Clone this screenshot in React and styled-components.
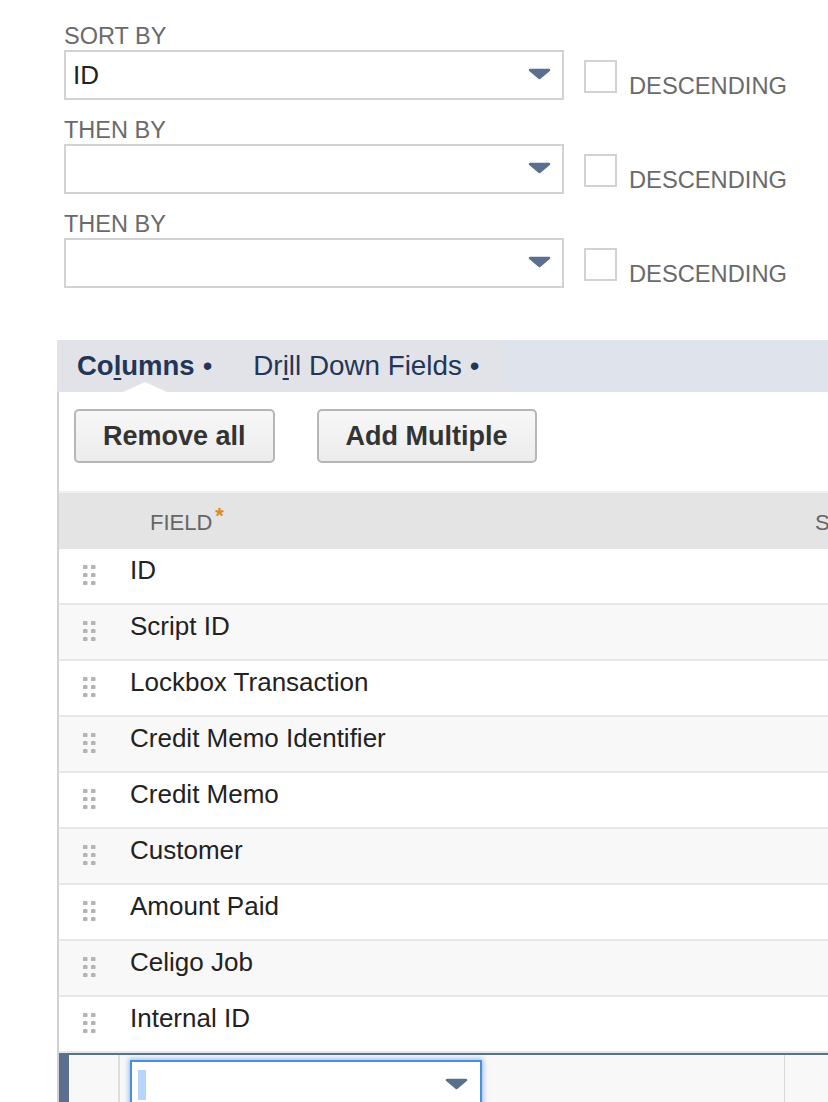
import React from "react";
import styled, { createGlobalStyle } from "styled-components";

const GlobalStyle = createGlobalStyle`
  html, body { margin: 0; padding: 0; background: #fff; }
  body {
    font-family: "Liberation Sans", Arial, Helvetica, sans-serif;
    overflow: hidden;
  }
`;

const Page = styled.div`
  width: 828px;
  height: 1102px;
  overflow: hidden;
  background: #fff;
`;

const SortForm = styled.div`
  display: flex;
  flex-direction: column;
  gap: 18px;
  padding: 24px 0 0 64px;
`;

const SortGroup = styled.div``;

const FieldLabel = styled.div`
  font-size: 23.5px;
  line-height: 24px;
  color: #6a6a6a;
  margin-bottom: 2px;
  white-space: nowrap;
`;

const SortRow = styled.div`
  display: flex;
  align-items: flex-start;
  height: 50px;
`;

const SelectBox = styled.div`
  box-sizing: border-box;
  width: ${(p) => p.$width}px;
  height: 50px;
  flex: none;
  border: 2px solid ${(p) => (p.$focused ? "#4a8fdb" : "#d2d2d2")};
  box-shadow: ${(p) => (p.$focused ? "0 0 5px 1px rgba(74,143,219,0.6)" : "none")};
  background: #fff;
  display: flex;
  align-items: center;
  justify-content: space-between;
  padding: 0 ${(p) => (p.$focused ? 12 : 11)}px 0 ${(p) => (p.$focused ? 6 : 7)}px;
  font-size: 26px;
  color: #222;
`;

const ArrowSvg = styled.svg`
  align-self: flex-start;
  margin-top: 16px;
  flex: none;
`;

const Checkbox = styled.span`
  box-sizing: border-box;
  width: 33px;
  height: 33px;
  flex: none;
  border: 2px solid #d2d2d2;
  background: #fff;
  margin: 10px 0 0 20px;
`;

const CheckLabel = styled.span`
  margin: 24px 0 0 12px;
  font-size: 23.7px;
  line-height: 24px;
  color: #6a6a6a;
  white-space: nowrap;
`;

const SubtabSection = styled.section`
  margin: 52px 0 0 57px;
  width: 900px;
`;

const TabBar = styled.div`
  display: flex;
  height: 52px;
  background: #dfe3ec;
`;

const TabGroup = styled.div`
  display: flex;
  background: #e2e3e8;
`;

const Tab = styled.div`
  position: relative;
  display: flex;
  align-items: center;
  padding: 0 ${(p) => (p.$active ? 20 : 21)}px;
  font-size: ${(p) => (p.$active ? 27.5 : 27.8)}px;
  color: #233657;
  font-weight: ${(p) => (p.$active ? 700 : 400)};
  white-space: nowrap;
  u { text-decoration-thickness: 2px; text-underline-offset: 3px; }
`;

const Bullet = styled.span`
  margin-left: 8px;
  font-weight: 400;
`;

const Notch = styled.span`
  position: absolute;
  bottom: 0;
  left: 50%;
  transform: translateX(-50%);
  width: 0;
  height: 0;
  border-left: 22px solid transparent;
  border-right: 22px solid transparent;
  border-bottom: 10px solid #fff;
`;

const Panel = styled.div`
  border-left: 2px solid #d2d2d2;
  background: #fff;
`;

const Toolbar = styled.div`
  display: flex;
  gap: 42px;
  padding: 17px 0 28px 15px;
`;

const Button = styled.button`
  box-sizing: border-box;
  height: 54px;
  padding: 0 27px;
  font-family: "Liberation Sans", Arial, sans-serif;
  font-weight: 700;
  font-size: 27px;
  color: #333;
  border: 2px solid #b6b6b6;
  border-radius: 5px;
  background: linear-gradient(#f7f7f7, #ececec);
  white-space: nowrap;
`;

const HeaderRow = styled.div`
  display: grid;
  grid-template-columns: 61px 665px 1fr;
  height: 56px;
  border-top: 2px solid #f0f0f0;
  background: #e4e4e4;
`;

const HeaderCell = styled.div`
  padding: 18px 0 0 30px;
  font-size: 22px;
  line-height: 24px;
  color: #666;
  white-space: nowrap;
  overflow: hidden;
`;

const Required = styled.span`
  color: #d98a1c;
  font-weight: 700;
  margin-left: 3px;
  position: relative;
  top: -7px;
`;

const Row = styled.div`
  display: grid;
  grid-template-columns: 61px 665px 1fr;
  height: 54px;
  border-bottom: 2px solid #e8e8e8;
  background: ${(p) => (p.$alt ? "#f8f8f8" : "#fff")};
`;

const HandleCell = styled.div`
  padding: 16px 0 0 24px;
`;

const ValueCell = styled.div`
  padding: 6px 0 0 10px;
  font-size: 26px;
  line-height: 30px;
  color: #222;
  white-space: nowrap;
`;

const EditRow = styled.div`
  display: grid;
  grid-template-columns: 61px 665px 1fr;
  height: 60px;
  border-top: 2px solid #5b6f8f;
  background: #f8f8f8;
`;

const EditHandleCell = styled.div`
  box-sizing: border-box;
  border-left: 10px solid #5b6f8f;
  border-right: 2px solid #dcdcdc;
`;

const EditFieldCell = styled.div`
  padding: 5px 0 0 10px;
  border-right: 1px solid #d8d8d8;
`;

const Caret = styled.span`
  align-self: flex-start;
  margin-top: 8px;
  width: 8px;
  height: 30px;
  background: #b7d5fb;
`;

const Arrow = () => (
  <ArrowSvg width="23" height="12" viewBox="0 0 23 12">
    <polygon
      points="2,2 21,2 11.5,10"
      fill="#5b6f8f"
      stroke="#5b6f8f"
      strokeWidth="2.5"
      strokeLinejoin="round"
    />
  </ArrowSvg>
);

const DragHandle = () => (
  <svg width="14" height="20" viewBox="0 0 14 20">
    {[0, 8, 16].map((y) =>
      [0, 8].map((x) => (
        <rect key={`${x}-${y}`} x={x} y={y} width="4.5" height="4" rx="0.8" fill="#b4b4b4" />
      ))
    )}
  </svg>
);

const sortRows = [
  { label: "SORT BY", value: "ID" },
  { label: "THEN BY", value: "" },
  { label: "THEN BY", value: "" },
];

const fields = [
  "ID",
  "Script ID",
  "Lockbox Transaction",
  "Credit Memo Identifier",
  "Credit Memo",
  "Customer",
  "Amount Paid",
  "Celigo Job",
  "Internal ID",
];

export default function App() {
  return (
    <Page>
      <GlobalStyle />
      <SortForm>
        {sortRows.map((r, i) => (
          <SortGroup key={i}>
            <FieldLabel>{r.label}</FieldLabel>
            <SortRow>
              <SelectBox $width={500}>
                <span>{r.value}</span>
                <Arrow />
              </SelectBox>
              <Checkbox />
              <CheckLabel>DESCENDING</CheckLabel>
            </SortRow>
          </SortGroup>
        ))}
      </SortForm>

      <SubtabSection>
        <TabBar>
          <TabGroup>
            <Tab $active>
              <span>
                Co<u>l</u>umns
              </span>
              <Bullet>•</Bullet>
              <Notch />
            </Tab>
            <Tab>
              <span>
                Dr<u>i</u>ll Down Fields
              </span>
              <Bullet>•</Bullet>
            </Tab>
          </TabGroup>
        </TabBar>

        <Panel>
          <Toolbar>
            <Button>Remove all</Button>
            <Button>Add Multiple</Button>
          </Toolbar>

          <HeaderRow>
            <div />
            <HeaderCell>
              FIELD<Required>*</Required>
            </HeaderCell>
            <HeaderCell>SUMMARY TYPE</HeaderCell>
          </HeaderRow>

          {fields.map((f, i) => (
            <Row key={f} $alt={i % 2 === 1}>
              <HandleCell>
                <DragHandle />
              </HandleCell>
              <ValueCell>{f}</ValueCell>
              <div />
            </Row>
          ))}

          <EditRow>
            <EditHandleCell />
            <EditFieldCell>
              <SelectBox $width={352} $focused>
                <Caret />
                <Arrow />
              </SelectBox>
            </EditFieldCell>
            <div />
          </EditRow>
        </Panel>
      </SubtabSection>
    </Page>
  );
}
